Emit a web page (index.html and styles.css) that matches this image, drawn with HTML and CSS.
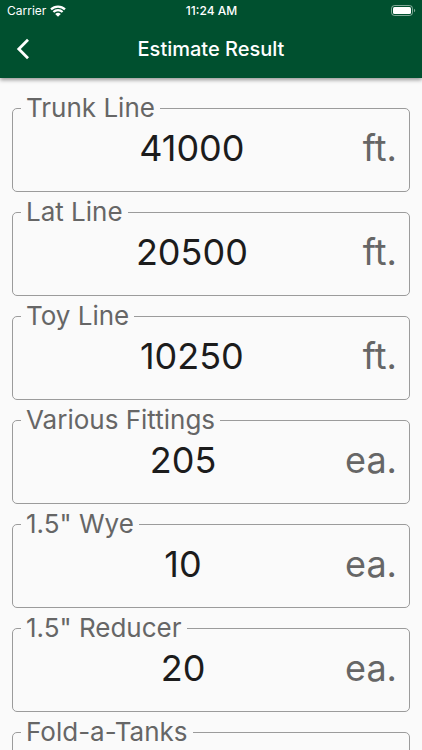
FILE: index.html
```
<!DOCTYPE html>
<html lang="en">
<head>
<meta charset="utf-8">
<meta name="viewport" content="width=device-width, initial-scale=1">
<title>Estimate Result</title>
<link rel="stylesheet" href="styles.css">
</head>
<body>
<header class="app-bar">
  <div class="status">
    <div class="carrier">
      <span>Carrier</span>
      <svg class="wifi" viewBox="0 0 16 12" aria-hidden="true">
        <path d="M1 4.4a10 10 0 0 1 14 0M3.4 7a6.6 6.6 0 0 1 9.2 0" fill="none" stroke="currentColor" stroke-width="2.2"/>
        <path d="M8 11.8 5.2 9a4 4 0 0 1 5.6 0z" fill="currentColor"/>
      </svg>
    </div>
    <span class="time">11:24 AM</span>
    <svg class="battery" viewBox="0 0 25 12" aria-hidden="true">
      <rect x=".5" y=".5" width="21" height="10" rx="3" fill="none" stroke="currentColor" stroke-opacity=".5"/>
      <rect x="2" y="2" width="18" height="7" rx="1.5" fill="currentColor"/>
      <path d="M23 3.8c1.6.5 1.6 2.9 0 3.4z" fill="currentColor" fill-opacity=".5"/>
    </svg>
  </div>
  <div class="toolbar">
    <button class="back" type="button" aria-label="Back">
      <svg viewBox="0 0 14 22" aria-hidden="true"><path d="M12 1.8 2.8 11l9.2 9.2" fill="none" stroke="currentColor" stroke-width="2.8"/></svg>
    </button>
    <h1 class="title">Estimate Result</h1>
  </div>
</header>
<main class="results">
  <fieldset class="field">
    <legend><label for="trunk">Trunk Line</label></legend>
    <div class="row"><input id="trunk" type="text" value="41000" readonly><span class="unit">ft.</span></div>
  </fieldset>
  <fieldset class="field">
    <legend><label for="lat">Lat Line</label></legend>
    <div class="row"><input id="lat" type="text" value="20500" readonly><span class="unit">ft.</span></div>
  </fieldset>
  <fieldset class="field">
    <legend><label for="toy">Toy Line</label></legend>
    <div class="row"><input id="toy" type="text" value="10250" readonly><span class="unit">ft.</span></div>
  </fieldset>
  <fieldset class="field">
    <legend><label for="fittings">Various Fittings</label></legend>
    <div class="row"><input id="fittings" type="text" value="205" readonly><span class="unit">ea.</span></div>
  </fieldset>
  <fieldset class="field">
    <legend><label for="wye">1.5" Wye</label></legend>
    <div class="row"><input id="wye" type="text" value="10" readonly><span class="unit">ea.</span></div>
  </fieldset>
  <fieldset class="field">
    <legend><label for="reducer">1.5" Reducer</label></legend>
    <div class="row"><input id="reducer" type="text" value="20" readonly><span class="unit">ea.</span></div>
  </fieldset>
  <fieldset class="field">
    <legend><label for="tanks">Fold-a-Tanks</label></legend>
    <div class="row"><input id="tanks" type="text" value="" readonly></div>
  </fieldset>
</main>
</body>
</html>
```
FILE: styles.css
```
* {
  box-sizing: border-box;
}

html {
  scrollbar-width: none;
}

body {
  margin: 0;
  background: #fafafa;
  color: #1c1c1c;
  font-family: Inter, "Liberation Sans", sans-serif;
}

.app-bar {
  position: sticky;
  top: 0;
  z-index: 1;
  padding-bottom: 2px;
  background: #00502f;
  color: #fff;
  box-shadow: 0 2px 4px rgba(0, 0, 0, 0.4);
}

.status {
  display: grid;
  grid-template-columns: 1fr auto 1fr;
  align-items: center;
  height: 22px;
  padding: 0 6px 0 7px;
  font-size: 12px;
  line-height: 22px;
}

.carrier {
  display: flex;
  align-items: center;
  gap: 4px;
}

.wifi {
  width: 16px;
  height: 12px;
}

.time {
  font-weight: 500;
}

.battery {
  justify-self: end;
  width: 25px;
  height: 12px;
}

.toolbar {
  display: grid;
  grid-template-columns: 46px 1fr 46px;
  align-items: center;
  height: 54px;
}

.back {
  display: grid;
  place-items: center;
  height: 54px;
  padding: 0;
  border: 0;
  background: none;
  color: inherit;
}

.back svg {
  width: 14px;
  height: 22px;
}

.title {
  margin: 0;
  font-size: 20px;
  font-weight: 500;
  line-height: 24px;
  text-align: center;
}

.results {
  display: flex;
  flex-direction: column;
  gap: 5px;
  padding: 15px 12px;
}

.field {
  min-width: 0;
  height: 99px;
  margin: 0;
  padding: 0 12px;
  border: 1px solid #9b9b9b;
  border-radius: 5px;
}

.field legend {
  margin-left: -4px;
  padding: 0 5px;
  color: #666;
  font-size: 26px;
  line-height: 30px;
}

.row {
  display: flex;
  align-items: center;
  gap: 4px;
  font-size: 36px;
  line-height: 50px;
}

.row input {
  flex: 1;
  min-width: 0;
  height: 50px;
  padding: 0;
  border: 0;
  outline: 0;
  background: none;
  color: inherit;
  font: inherit;
  text-align: center;
}

.unit {
  color: #666;
}
```
